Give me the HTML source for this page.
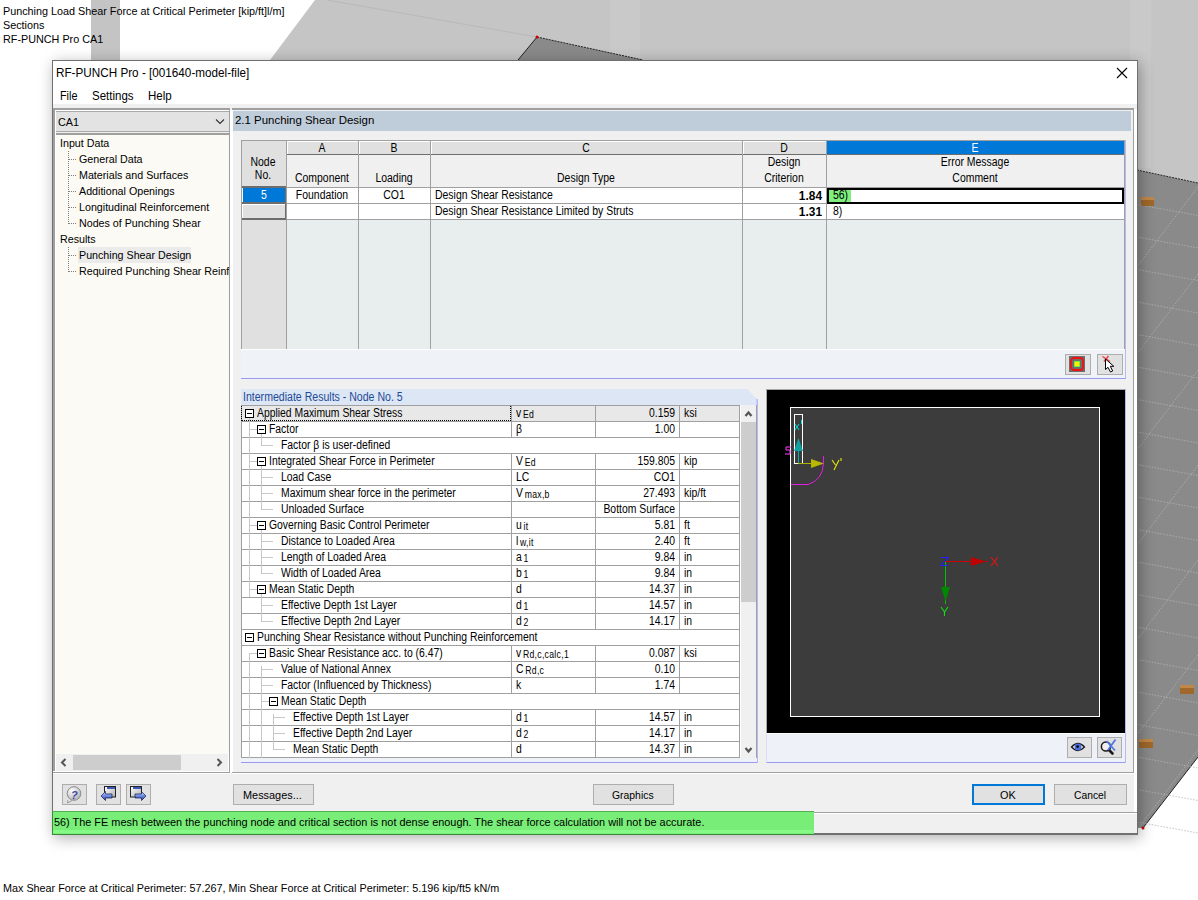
<!DOCTYPE html>
<html><head><meta charset="utf-8">
<style>
*{margin:0;padding:0;box-sizing:border-box}
html,body{width:1198px;height:900px;overflow:hidden;background:#fff}
body{position:relative;font-family:"Liberation Sans",sans-serif;font-size:12px;color:#000}
.a{position:absolute}
.t{position:absolute;white-space:nowrap}
.btn{position:absolute;background:#e1e1e1;border:1px solid #adadad}
</style></head><body>

<svg class="a" style="left:0;top:0" width="1198" height="900">
  <polygon points="315,0 1198,0 1198,60 270,60" fill="#c5c5c5"/>
  <rect x="91" y="0" width="29" height="60" fill="#c4c4c4"/>
  <polygon points="1137,60 1198,60 1198,183 1137,170" fill="#c5c5c5"/>
  <rect x="1130" y="0" width="21" height="168" fill="#c9c9c9"/>
  <rect x="610" y="0" width="30" height="60" fill="#c9c9c9"/>
  <polygon points="1137,170 1198,183 1198,757 1143,828 1137,828" fill="#8a8a8a"/>
  <path d="M1137 170L1198 183" stroke="#222" stroke-width="1" stroke-dasharray="2,1"/>
  <path d="M1143 828L1198 757" stroke="#222" stroke-width="1"/>
  <polygon points="537,37 643,60 518,60" fill="#8a8a8a"/>
  <path d="M537 37L643 60" stroke="#222" stroke-width="1" stroke-dasharray="2,1"/>
  <path d="M537 37L518 60" stroke="#222" stroke-width="1"/>
  <path d="M327 0L537 37" stroke="#b0b0b0" stroke-width="0.6"/>
  <circle cx="537" cy="37" r="1.5" fill="#c00"/>
  <circle cx="1143" cy="828" r="1.5" fill="#c00"/>
  <g stroke="#b4b4b4" stroke-width="0.8" stroke-dasharray="1.5,1.5" fill="none"><path d="M1137 204.5L1198 215.5"/><path d="M1137 237.0L1198 248.0"/><path d="M1137 269.5L1198 280.5"/><path d="M1137 302.0L1198 313.0"/><path d="M1137 334.5L1198 345.5"/><path d="M1137 367.0L1198 378.0"/><path d="M1137 399.5L1198 410.5"/><path d="M1137 432.0L1198 443.0"/><path d="M1137 464.5L1198 475.5"/><path d="M1137 497.0L1198 508.0"/><path d="M1137 529.5L1198 540.5"/><path d="M1137 562.0L1198 573.0"/><path d="M1137 594.5L1198 605.5"/><path d="M1137 627.0L1198 638.0"/><path d="M1137 659.5L1198 670.5"/><path d="M1137 692.0L1198 703.0"/><path d="M1137 724.5L1198 735.5"/><path d="M1137 757.0L1198 768.0"/><path d="M1137 789.5L1198 800.5"/><path d="M1137 822.0L1198 833.0"/><path d="M1137 267L1198 187"/><path d="M1137 354L1198 274"/><path d="M1137 450L1198 370"/><path d="M1137 545L1198 465"/><path d="M1137 640L1198 560"/><path d="M1137 735L1198 655"/><path d="M1137 830L1198 750"/></g>
  <g><rect x="1141" y="197" width="13" height="9" rx="1" fill="#a0682a"/><rect x="1141" y="197" width="13" height="3" fill="#c08848"/>
  <rect x="1180" y="685" width="14" height="9" rx="1" fill="#a0682a"/><rect x="1180" y="685" width="14" height="3" fill="#c08848"/>
  <rect x="1139" y="739" width="14" height="9" rx="1" fill="#a0682a"/><rect x="1139" y="739" width="14" height="3" fill="#c08848"/></g>
</svg>

<div class="t" style="left:3px;top:5px;font-size:10.8px;line-height:12px;">Punching Load Shear Force at Critical Perimeter [kip/ft]l/m]</div>
<div class="t" style="left:3px;top:19px;font-size:10.8px;line-height:12px;">Sections</div>
<div class="t" style="left:3px;top:33px;font-size:10.8px;line-height:12px;">RF-PUNCH Pro CA1</div>
<div class="t" style="left:3px;top:882px;font-size:10.8px;line-height:12px;">Max Shear Force at Critical Perimeter: 57.267, Min Shear Force at Critical Perimeter: 5.196 kip/ft5 kN/m</div>
<div class="a" style="left:52px;top:60px;width:1086px;height:775px;background:#f0f0f0;border:1px solid #707070;box-shadow:2px 3px 14px rgba(0,0,0,.32)"></div>
<div class="a" style="left:53px;top:61px;width:1084px;height:43px;background:#fff"></div>
<div class="t" style="left:56px;top:66px;font-size:12.6px;line-height:14px;transform:scaleX(0.93);transform-origin:0 0;">RF-PUNCH Pro - [001640-model-file]</div>
<svg class="a" style="left:1116px;top:67px" width="12" height="12"><path d="M1 1L11 11M11 1L1 11" stroke="#000" stroke-width="1.1"/></svg>
<div class="t" style="left:60px;top:89px;font-size:12px;line-height:14px;transform:scaleX(0.9);transform-origin:0 0;">File</div>
<div class="t" style="left:92px;top:89px;font-size:12px;line-height:14px;transform:scaleX(0.96);transform-origin:0 0;">Settings</div>
<div class="t" style="left:148px;top:89px;font-size:12px;line-height:14px;transform:scaleX(0.96);transform-origin:0 0;">Help</div>
<div class="a" style="left:53px;top:108px;width:177px;height:2px;background:#a0a0a0"></div>
<div class="a" style="left:53px;top:108px;width:2px;height:665px;background:#a0a0a0"></div>
<div class="a" style="left:55px;top:110px;width:174px;height:662px;background:#f0f0f0;border-left:1px solid #fff;border-top:1px solid #fff"></div>
<div class="a" style="left:229px;top:108px;width:1px;height:665px;background:#a0a0a0"></div>
<div class="a" style="left:56px;top:111px;width:173px;height:21px;background:#e3e3e3;border-top:1px solid #a9a9a9;border-bottom:1px solid #a9a9a9"></div>
<div class="t" style="left:58px;top:116px;font-size:10.8px;line-height:12px;">CA1</div>
<svg class="a" style="left:215px;top:118px" width="12" height="8"><path d="M1 1.5L5 5.5L9 1.5" stroke="#333" stroke-width="1.1" fill="none"/></svg>
<div class="a" style="left:56px;top:133px;width:173px;height:621px;background:#fbfaf4;border-top:2px solid #a0a0a0"></div>
<div class="a" style="left:78px;top:247px;width:113px;height:16px;background:#ebebeb"></div>
<div class="t" style="left:60px;top:137px;font-size:10.7px;line-height:12px;">Input Data</div>
<div class="t" style="left:79px;top:153px;font-size:10.7px;line-height:12px;">General Data</div>
<div class="t" style="left:79px;top:169px;font-size:10.7px;line-height:12px;">Materials and Surfaces</div>
<div class="t" style="left:79px;top:185px;font-size:10.7px;line-height:12px;">Additional Openings</div>
<div class="t" style="left:79px;top:201px;font-size:10.7px;line-height:12px;">Longitudinal Reinforcement</div>
<div class="t" style="left:79px;top:217px;font-size:10.7px;line-height:12px;">Nodes of Punching Shear</div>
<div class="t" style="left:60px;top:233px;font-size:10.7px;line-height:12px;">Results</div>
<div class="t" style="left:79px;top:249px;font-size:10.7px;line-height:12px;">Punching Shear Design</div>
<div class="t" style="left:79px;top:265px;font-size:10.7px;line-height:12px;">Required Punching Shear Reinf</div>
<svg class="a" style="left:56px;top:133px" width="173" height="160"><g stroke="#808080" stroke-width="1" stroke-dasharray="1,1" fill="none"><path d="M12.5 18V91"/><path d="M12.5 114V139"/><path d="M13 26.5H21"/><path d="M13 42.5H21"/><path d="M13 58.5H21"/><path d="M13 74.5H21"/><path d="M13 90.5H21"/><path d="M13 122.5H21"/><path d="M13 138.5H21"/></g></svg>
<div class="a" style="left:56px;top:754px;width:173px;height:17px;background:#f0f0f0;border-right:1px solid #fff"></div>
<div class="a" style="left:73px;top:755px;width:108px;height:15px;background:#cdcdcd"></div>
<svg class="a" style="left:58px;top:756px" width="12" height="12"><path d="M7.5 3L4 6.5L7.5 10" stroke="#555" stroke-width="2" fill="none"/></svg>
<svg class="a" style="left:213px;top:756px" width="12" height="12"><path d="M4.5 3L8 6.5L4.5 10" stroke="#555" stroke-width="2" fill="none"/></svg>
<div class="a" style="left:53px;top:771px;width:176px;height:1px;background:#fff"></div>
<div class="a" style="left:53px;top:772px;width:177px;height:1px;background:#a0a0a0"></div>
<div class="a" style="left:53px;top:773px;width:177px;height:1px;background:#fff"></div>
<div class="a" style="left:232px;top:108px;width:902px;height:2px;background:#a0a0a0"></div>
<div class="a" style="left:229px;top:108px;width:1px;height:665px;background:#a0a0a0"></div>
<div class="a" style="left:230px;top:110px;width:3px;height:663px;background:#fff"></div>
<div class="a" style="left:1133px;top:108px;width:1px;height:665px;background:#a0a0a0"></div>
<div class="a" style="left:1134px;top:109px;width:3px;height:703px;background:#fff"></div>
<div class="a" style="left:233px;top:111px;width:898px;height:20px;background:#bfcddb"></div>
<div class="t" style="left:235px;top:114px;font-size:11.45px;line-height:13px;">2.1 Punching Shear Design</div>
<div class="a" style="left:232px;top:772px;width:902px;height:1px;background:#a0a0a0"></div>
<div class="a" style="left:232px;top:773px;width:902px;height:1px;background:#fff"></div>
<div class="a" style="left:241px;top:140px;width:884px;height:209px;background:#e8eded"></div>
<div class="a" style="left:241px;top:140px;width:883px;height:47px;background:#f0f0f0"></div>
<div class="a" style="left:241px;top:140px;width:45px;height:209px;background:#e0e0e0"></div>
<div class="a" style="left:287px;top:141px;width:71px;height:13px;background:#e0e0e0;border-top:1px solid #fff;border-left:1px solid #fff"></div>
<div class="t" style="left:122px;top:141px;width:400px;text-align:center;font-size:12px;line-height:14px;transform:scaleX(0.87);transform-origin:50% 0;">A</div>
<div class="a" style="left:286px;top:154px;width:72px;height:1px;background:#6d6d6d"></div>
<div class="a" style="left:359px;top:141px;width:71px;height:13px;background:#e0e0e0;border-top:1px solid #fff;border-left:1px solid #fff"></div>
<div class="t" style="left:194px;top:141px;width:400px;text-align:center;font-size:12px;line-height:14px;transform:scaleX(0.87);transform-origin:50% 0;">B</div>
<div class="a" style="left:358px;top:154px;width:72px;height:1px;background:#6d6d6d"></div>
<div class="a" style="left:431px;top:141px;width:311px;height:13px;background:#e0e0e0;border-top:1px solid #fff;border-left:1px solid #fff"></div>
<div class="t" style="left:386px;top:141px;width:400px;text-align:center;font-size:12px;line-height:14px;transform:scaleX(0.87);transform-origin:50% 0;">C</div>
<div class="a" style="left:430px;top:154px;width:312px;height:1px;background:#6d6d6d"></div>
<div class="a" style="left:743px;top:141px;width:83px;height:13px;background:#e0e0e0;border-top:1px solid #fff;border-left:1px solid #fff"></div>
<div class="t" style="left:584px;top:141px;width:400px;text-align:center;font-size:12px;line-height:14px;transform:scaleX(0.87);transform-origin:50% 0;">D</div>
<div class="a" style="left:742px;top:154px;width:84px;height:1px;background:#6d6d6d"></div>
<div class="a" style="left:827px;top:141px;width:297px;height:13px;background:#0078d7"></div>
<div class="t" style="left:775px;top:141px;width:400px;text-align:center;font-size:12px;line-height:14px;transform:scaleX(0.87);transform-origin:50% 0;color:#fff">E</div>
<div class="a" style="left:826px;top:154px;width:298px;height:1px;background:#6d6d6d"></div>
<div class="a" style="left:286px;top:187px;width:838px;height:32px;background:#fff"></div>
<div class="a" style="left:242px;top:187px;width:43px;height:16px;background:#fff"></div>
<div class="a" style="left:243px;top:188px;width:42px;height:14px;background:#0078d7"></div>
<div class="a" style="left:242px;top:204px;width:43px;height:14px;background:#e0e0e0;border-top:1px solid #fff;border-left:1px solid #fff"></div>
<div class="a" style="left:241px;top:218px;width:45px;height:2px;background:#6d6d6d"></div>
<div class="a" style="left:241px;top:202px;width:45px;height:2px;background:#6d6d6d"></div>
<div class="a" style="left:241px;top:186px;width:45px;height:2px;background:#6d6d6d"></div>
<div class="a" style="left:285px;top:187px;width:1px;height:33px;background:#6d6d6d"></div>
<div class="a" style="left:241px;top:140px;width:1px;height:209px;background:#a0a0a0"></div>
<div class="a" style="left:286px;top:140px;width:1px;height:209px;background:#a0a0a0"></div>
<div class="a" style="left:358px;top:140px;width:1px;height:209px;background:#a0a0a0"></div>
<div class="a" style="left:430px;top:140px;width:1px;height:209px;background:#a0a0a0"></div>
<div class="a" style="left:742px;top:140px;width:1px;height:209px;background:#a0a0a0"></div>
<div class="a" style="left:826px;top:140px;width:1px;height:209px;background:#a0a0a0"></div>
<div class="a" style="left:1124px;top:140px;width:1px;height:209px;background:#a0a0a0"></div>
<div class="a" style="left:241px;top:140px;width:883px;height:1px;background:#a0a0a0"></div>
<div class="a" style="left:286px;top:187px;width:838px;height:1px;background:#a0a0a0"></div>
<div class="a" style="left:286px;top:203px;width:838px;height:1px;background:#a0a0a0"></div>
<div class="a" style="left:286px;top:219px;width:838px;height:1px;background:#a0a0a0"></div>
<div class="t" style="left:63px;top:155px;width:400px;text-align:center;font-size:12px;line-height:14px;transform:scaleX(0.87);transform-origin:50% 0;">Node</div>
<div class="t" style="left:63px;top:168px;width:400px;text-align:center;font-size:12px;line-height:14px;transform:scaleX(0.87);transform-origin:50% 0;">No.</div>
<div class="t" style="left:122px;top:171px;width:400px;text-align:center;font-size:12px;line-height:14px;transform:scaleX(0.87);transform-origin:50% 0;">Component</div>
<div class="t" style="left:194px;top:171px;width:400px;text-align:center;font-size:12px;line-height:14px;transform:scaleX(0.87);transform-origin:50% 0;">Loading</div>
<div class="t" style="left:386px;top:171px;width:400px;text-align:center;font-size:12px;line-height:14px;transform:scaleX(0.87);transform-origin:50% 0;">Design Type</div>
<div class="t" style="left:584px;top:155px;width:400px;text-align:center;font-size:12px;line-height:14px;transform:scaleX(0.87);transform-origin:50% 0;">Design</div>
<div class="t" style="left:584px;top:171px;width:400px;text-align:center;font-size:12px;line-height:14px;transform:scaleX(0.87);transform-origin:50% 0;">Criterion</div>
<div class="t" style="left:775px;top:155px;width:400px;text-align:center;font-size:12px;line-height:14px;transform:scaleX(0.87);transform-origin:50% 0;">Error Message</div>
<div class="t" style="left:775px;top:171px;width:400px;text-align:center;font-size:12px;line-height:14px;transform:scaleX(0.87);transform-origin:50% 0;">Comment</div>
<div class="t" style="left:64px;top:188px;width:400px;text-align:center;font-size:12px;line-height:14px;transform:scaleX(0.87);transform-origin:50% 0;color:#fff">5</div>
<div class="t" style="left:122px;top:188px;width:400px;text-align:center;font-size:12px;line-height:14px;transform:scaleX(0.87);transform-origin:50% 0;">Foundation</div>
<div class="t" style="left:194px;top:188px;width:400px;text-align:center;font-size:12px;line-height:14px;transform:scaleX(0.87);transform-origin:50% 0;">CO1</div>
<div class="t" style="left:435px;top:188px;font-size:12px;line-height:14px;transform:scaleX(0.87);transform-origin:0 0;">Design Shear Resistance</div>
<div class="t" style="left:422px;top:189px;width:400px;text-align:right;font-size:12.5px;line-height:14px;transform:scaleX(0.95);transform-origin:100% 0;font-weight:bold">1.84</div>
<div class="a" style="left:827px;top:188px;width:297px;height:16px;border:2px solid #000;background:#fff"></div>
<div class="a" style="left:829px;top:190px;width:22px;height:12px;background:#7df07d"></div>
<div class="t" style="left:833px;top:188px;font-size:12px;line-height:14px;transform:scaleX(0.87);transform-origin:0 0;">56)</div>
<div class="t" style="left:435px;top:204px;font-size:12px;line-height:14px;transform:scaleX(0.87);transform-origin:0 0;">Design Shear Resistance Limited by Struts</div>
<div class="t" style="left:422px;top:205px;width:400px;text-align:right;font-size:12.5px;line-height:14px;transform:scaleX(0.95);transform-origin:100% 0;font-weight:bold">1.31</div>
<div class="t" style="left:833px;top:204px;font-size:12px;line-height:14px;transform:scaleX(0.87);transform-origin:0 0;">8)</div>
<div class="a" style="left:241px;top:349px;width:885px;height:30px;background:#eff3f8;border-bottom:1px solid #9a9af0;border-right:1px solid #b8b8f8"></div>
<div class="a" style="left:1125px;top:140px;width:1px;height:209px;background:#b8b8f8"></div>
<div class="a" style="left:241px;top:349px;width:884px;height:1px;background:#fff"></div>
<div class="a" style="left:1065px;top:354px;width:26px;height:21px;background:#e1e1e1;border:1px solid #adadad"></div>
<div class="a" style="left:1097px;top:354px;width:26px;height:21px;background:#e1e1e1;border:1px solid #adadad"></div>
<svg class="a" style="left:1069px;top:356px" width="17" height="17"><rect x="0" y="0" width="16" height="16" fill="#6d6d6d"/><rect x="2" y="2" width="12" height="12" rx="3" fill="none" stroke="#ee1111" stroke-width="1.8"/><rect x="5" y="5" width="6" height="6" fill="#44ee44"/><rect x="5.7" y="5.7" width="4.6" height="4.6" fill="#ffee00"/></svg>
<svg class="a" style="left:1099px;top:355px" width="20" height="20"><path d="M3.5 1.5L11 6.5M9.5 1L5 6.5" stroke="#ee4444" stroke-width="1.5"/><path d="M6.5 4L6.5 14.5L9 12.3L11.5 17L13.7 16L11.3 11.3L14.8 11.3Z" fill="#fff" stroke="#000" stroke-width="1"/></svg>
<style>.sb{font-size:10px;margin-left:2px;letter-spacing:.35px;position:relative;top:1px}</style><svg class="a" style="left:241px;top:389px" width="517" height="17"><path d="M0 0H506L516 10V16H0Z" fill="#dce6f4"/><path d="M516 10V17" stroke="#b8b8f8"/></svg>
<div class="t" style="left:243px;top:390px;font-size:12px;line-height:14px;transform:scaleX(0.88);transform-origin:0 0;color:#1e4a96">Intermediate Results - Node No. 5</div>
<div class="a" style="left:241px;top:405px;width:499px;height:353px;background:#fff"></div>
<div class="a" style="left:241px;top:406px;width:499px;height:15px;background:#e8e8e8"></div>
<div class="t" style="left:257px;top:406px;font-size:12px;line-height:14px;transform:scaleX(0.865);transform-origin:0 0;">Applied Maximum Shear Stress</div>
<div class="a" style="left:511px;top:405px;width:1px;height:16px;background:#a0a0a0"></div>
<div class="a" style="left:595px;top:405px;width:1px;height:16px;background:#a0a0a0"></div>
<div class="a" style="left:679px;top:405px;width:1px;height:16px;background:#a0a0a0"></div>
<div class="t" style="left:516px;top:406px;font-size:12px;line-height:14px;transform:scaleX(0.865);transform-origin:0 0;">v<span class=sb>Ed</span></div>
<div class="t" style="left:275px;top:406px;width:400px;text-align:right;font-size:12px;line-height:14px;transform:scaleX(0.865);transform-origin:100% 0;">0.159</div>
<div class="t" style="left:684px;top:406px;font-size:12px;line-height:14px;transform:scaleX(0.865);transform-origin:0 0;">ksi</div>
<div class="a" style="left:241px;top:421px;width:499px;height:1px;background:#a0a0a0"></div>
<div class="t" style="left:269px;top:422px;font-size:12px;line-height:14px;transform:scaleX(0.865);transform-origin:0 0;">Factor</div>
<div class="a" style="left:511px;top:421px;width:1px;height:16px;background:#a0a0a0"></div>
<div class="a" style="left:595px;top:421px;width:1px;height:16px;background:#a0a0a0"></div>
<div class="a" style="left:679px;top:421px;width:1px;height:16px;background:#a0a0a0"></div>
<div class="t" style="left:516px;top:422px;font-size:12px;line-height:14px;transform:scaleX(0.865);transform-origin:0 0;">β</div>
<div class="t" style="left:275px;top:422px;width:400px;text-align:right;font-size:12px;line-height:14px;transform:scaleX(0.865);transform-origin:100% 0;">1.00</div>
<div class="t" style="left:684px;top:422px;font-size:12px;line-height:14px;transform:scaleX(0.865);transform-origin:0 0;"></div>
<div class="a" style="left:241px;top:437px;width:499px;height:1px;background:#a0a0a0"></div>
<div class="t" style="left:281px;top:438px;font-size:12px;line-height:14px;transform:scaleX(0.865);transform-origin:0 0;">Factor β is user-defined</div>
<div class="a" style="left:241px;top:453px;width:499px;height:1px;background:#a0a0a0"></div>
<div class="t" style="left:269px;top:454px;font-size:12px;line-height:14px;transform:scaleX(0.865);transform-origin:0 0;">Integrated Shear Force in Perimeter</div>
<div class="a" style="left:511px;top:453px;width:1px;height:16px;background:#a0a0a0"></div>
<div class="a" style="left:595px;top:453px;width:1px;height:16px;background:#a0a0a0"></div>
<div class="a" style="left:679px;top:453px;width:1px;height:16px;background:#a0a0a0"></div>
<div class="t" style="left:516px;top:454px;font-size:12px;line-height:14px;transform:scaleX(0.865);transform-origin:0 0;">V<span class=sb>Ed</span></div>
<div class="t" style="left:275px;top:454px;width:400px;text-align:right;font-size:12px;line-height:14px;transform:scaleX(0.865);transform-origin:100% 0;">159.805</div>
<div class="t" style="left:684px;top:454px;font-size:12px;line-height:14px;transform:scaleX(0.865);transform-origin:0 0;">kip</div>
<div class="a" style="left:241px;top:469px;width:499px;height:1px;background:#a0a0a0"></div>
<div class="t" style="left:281px;top:470px;font-size:12px;line-height:14px;transform:scaleX(0.865);transform-origin:0 0;">Load Case</div>
<div class="a" style="left:511px;top:469px;width:1px;height:16px;background:#a0a0a0"></div>
<div class="a" style="left:595px;top:469px;width:1px;height:16px;background:#a0a0a0"></div>
<div class="a" style="left:679px;top:469px;width:1px;height:16px;background:#a0a0a0"></div>
<div class="t" style="left:516px;top:470px;font-size:12px;line-height:14px;transform:scaleX(0.865);transform-origin:0 0;">LC</div>
<div class="t" style="left:275px;top:470px;width:400px;text-align:right;font-size:12px;line-height:14px;transform:scaleX(0.865);transform-origin:100% 0;">CO1</div>
<div class="t" style="left:684px;top:470px;font-size:12px;line-height:14px;transform:scaleX(0.865);transform-origin:0 0;"></div>
<div class="a" style="left:241px;top:485px;width:499px;height:1px;background:#a0a0a0"></div>
<div class="t" style="left:281px;top:486px;font-size:12px;line-height:14px;transform:scaleX(0.865);transform-origin:0 0;">Maximum shear force in the perimeter</div>
<div class="a" style="left:511px;top:485px;width:1px;height:16px;background:#a0a0a0"></div>
<div class="a" style="left:595px;top:485px;width:1px;height:16px;background:#a0a0a0"></div>
<div class="a" style="left:679px;top:485px;width:1px;height:16px;background:#a0a0a0"></div>
<div class="t" style="left:516px;top:486px;font-size:12px;line-height:14px;transform:scaleX(0.865);transform-origin:0 0;">V<span class=sb>max,b</span></div>
<div class="t" style="left:275px;top:486px;width:400px;text-align:right;font-size:12px;line-height:14px;transform:scaleX(0.865);transform-origin:100% 0;">27.493</div>
<div class="t" style="left:684px;top:486px;font-size:12px;line-height:14px;transform:scaleX(0.865);transform-origin:0 0;">kip/ft</div>
<div class="a" style="left:241px;top:501px;width:499px;height:1px;background:#a0a0a0"></div>
<div class="t" style="left:281px;top:502px;font-size:12px;line-height:14px;transform:scaleX(0.865);transform-origin:0 0;">Unloaded Surface</div>
<div class="a" style="left:511px;top:501px;width:1px;height:16px;background:#a0a0a0"></div>
<div class="a" style="left:595px;top:501px;width:1px;height:16px;background:#a0a0a0"></div>
<div class="a" style="left:679px;top:501px;width:1px;height:16px;background:#a0a0a0"></div>
<div class="t" style="left:516px;top:502px;font-size:12px;line-height:14px;transform:scaleX(0.865);transform-origin:0 0;"></div>
<div class="t" style="left:275px;top:502px;width:400px;text-align:right;font-size:12px;line-height:14px;transform:scaleX(0.865);transform-origin:100% 0;">Bottom Surface</div>
<div class="t" style="left:684px;top:502px;font-size:12px;line-height:14px;transform:scaleX(0.865);transform-origin:0 0;"></div>
<div class="a" style="left:241px;top:517px;width:499px;height:1px;background:#a0a0a0"></div>
<div class="t" style="left:269px;top:518px;font-size:12px;line-height:14px;transform:scaleX(0.865);transform-origin:0 0;">Governing Basic Control Perimeter</div>
<div class="a" style="left:511px;top:517px;width:1px;height:16px;background:#a0a0a0"></div>
<div class="a" style="left:595px;top:517px;width:1px;height:16px;background:#a0a0a0"></div>
<div class="a" style="left:679px;top:517px;width:1px;height:16px;background:#a0a0a0"></div>
<div class="t" style="left:516px;top:518px;font-size:12px;line-height:14px;transform:scaleX(0.865);transform-origin:0 0;">u<span class=sb>it</span></div>
<div class="t" style="left:275px;top:518px;width:400px;text-align:right;font-size:12px;line-height:14px;transform:scaleX(0.865);transform-origin:100% 0;">5.81</div>
<div class="t" style="left:684px;top:518px;font-size:12px;line-height:14px;transform:scaleX(0.865);transform-origin:0 0;">ft</div>
<div class="a" style="left:241px;top:533px;width:499px;height:1px;background:#a0a0a0"></div>
<div class="t" style="left:281px;top:534px;font-size:12px;line-height:14px;transform:scaleX(0.865);transform-origin:0 0;">Distance to Loaded Area</div>
<div class="a" style="left:511px;top:533px;width:1px;height:16px;background:#a0a0a0"></div>
<div class="a" style="left:595px;top:533px;width:1px;height:16px;background:#a0a0a0"></div>
<div class="a" style="left:679px;top:533px;width:1px;height:16px;background:#a0a0a0"></div>
<div class="t" style="left:516px;top:534px;font-size:12px;line-height:14px;transform:scaleX(0.865);transform-origin:0 0;">l<span class=sb>w,it</span></div>
<div class="t" style="left:275px;top:534px;width:400px;text-align:right;font-size:12px;line-height:14px;transform:scaleX(0.865);transform-origin:100% 0;">2.40</div>
<div class="t" style="left:684px;top:534px;font-size:12px;line-height:14px;transform:scaleX(0.865);transform-origin:0 0;">ft</div>
<div class="a" style="left:241px;top:549px;width:499px;height:1px;background:#a0a0a0"></div>
<div class="t" style="left:281px;top:550px;font-size:12px;line-height:14px;transform:scaleX(0.865);transform-origin:0 0;">Length of Loaded Area</div>
<div class="a" style="left:511px;top:549px;width:1px;height:16px;background:#a0a0a0"></div>
<div class="a" style="left:595px;top:549px;width:1px;height:16px;background:#a0a0a0"></div>
<div class="a" style="left:679px;top:549px;width:1px;height:16px;background:#a0a0a0"></div>
<div class="t" style="left:516px;top:550px;font-size:12px;line-height:14px;transform:scaleX(0.865);transform-origin:0 0;">a<span class=sb>1</span></div>
<div class="t" style="left:275px;top:550px;width:400px;text-align:right;font-size:12px;line-height:14px;transform:scaleX(0.865);transform-origin:100% 0;">9.84</div>
<div class="t" style="left:684px;top:550px;font-size:12px;line-height:14px;transform:scaleX(0.865);transform-origin:0 0;">in</div>
<div class="a" style="left:241px;top:565px;width:499px;height:1px;background:#a0a0a0"></div>
<div class="t" style="left:281px;top:566px;font-size:12px;line-height:14px;transform:scaleX(0.865);transform-origin:0 0;">Width of Loaded Area</div>
<div class="a" style="left:511px;top:565px;width:1px;height:16px;background:#a0a0a0"></div>
<div class="a" style="left:595px;top:565px;width:1px;height:16px;background:#a0a0a0"></div>
<div class="a" style="left:679px;top:565px;width:1px;height:16px;background:#a0a0a0"></div>
<div class="t" style="left:516px;top:566px;font-size:12px;line-height:14px;transform:scaleX(0.865);transform-origin:0 0;">b<span class=sb>1</span></div>
<div class="t" style="left:275px;top:566px;width:400px;text-align:right;font-size:12px;line-height:14px;transform:scaleX(0.865);transform-origin:100% 0;">9.84</div>
<div class="t" style="left:684px;top:566px;font-size:12px;line-height:14px;transform:scaleX(0.865);transform-origin:0 0;">in</div>
<div class="a" style="left:241px;top:581px;width:499px;height:1px;background:#a0a0a0"></div>
<div class="t" style="left:269px;top:582px;font-size:12px;line-height:14px;transform:scaleX(0.865);transform-origin:0 0;">Mean Static Depth</div>
<div class="a" style="left:511px;top:581px;width:1px;height:16px;background:#a0a0a0"></div>
<div class="a" style="left:595px;top:581px;width:1px;height:16px;background:#a0a0a0"></div>
<div class="a" style="left:679px;top:581px;width:1px;height:16px;background:#a0a0a0"></div>
<div class="t" style="left:516px;top:582px;font-size:12px;line-height:14px;transform:scaleX(0.865);transform-origin:0 0;">d</div>
<div class="t" style="left:275px;top:582px;width:400px;text-align:right;font-size:12px;line-height:14px;transform:scaleX(0.865);transform-origin:100% 0;">14.37</div>
<div class="t" style="left:684px;top:582px;font-size:12px;line-height:14px;transform:scaleX(0.865);transform-origin:0 0;">in</div>
<div class="a" style="left:241px;top:597px;width:499px;height:1px;background:#a0a0a0"></div>
<div class="t" style="left:281px;top:598px;font-size:12px;line-height:14px;transform:scaleX(0.865);transform-origin:0 0;">Effective Depth 1st Layer</div>
<div class="a" style="left:511px;top:597px;width:1px;height:16px;background:#a0a0a0"></div>
<div class="a" style="left:595px;top:597px;width:1px;height:16px;background:#a0a0a0"></div>
<div class="a" style="left:679px;top:597px;width:1px;height:16px;background:#a0a0a0"></div>
<div class="t" style="left:516px;top:598px;font-size:12px;line-height:14px;transform:scaleX(0.865);transform-origin:0 0;">d<span class=sb>1</span></div>
<div class="t" style="left:275px;top:598px;width:400px;text-align:right;font-size:12px;line-height:14px;transform:scaleX(0.865);transform-origin:100% 0;">14.57</div>
<div class="t" style="left:684px;top:598px;font-size:12px;line-height:14px;transform:scaleX(0.865);transform-origin:0 0;">in</div>
<div class="a" style="left:241px;top:613px;width:499px;height:1px;background:#a0a0a0"></div>
<div class="t" style="left:281px;top:614px;font-size:12px;line-height:14px;transform:scaleX(0.865);transform-origin:0 0;">Effective Depth 2nd Layer</div>
<div class="a" style="left:511px;top:613px;width:1px;height:16px;background:#a0a0a0"></div>
<div class="a" style="left:595px;top:613px;width:1px;height:16px;background:#a0a0a0"></div>
<div class="a" style="left:679px;top:613px;width:1px;height:16px;background:#a0a0a0"></div>
<div class="t" style="left:516px;top:614px;font-size:12px;line-height:14px;transform:scaleX(0.865);transform-origin:0 0;">d<span class=sb>2</span></div>
<div class="t" style="left:275px;top:614px;width:400px;text-align:right;font-size:12px;line-height:14px;transform:scaleX(0.865);transform-origin:100% 0;">14.17</div>
<div class="t" style="left:684px;top:614px;font-size:12px;line-height:14px;transform:scaleX(0.865);transform-origin:0 0;">in</div>
<div class="a" style="left:241px;top:629px;width:499px;height:1px;background:#a0a0a0"></div>
<div class="t" style="left:257px;top:630px;font-size:12px;line-height:14px;transform:scaleX(0.865);transform-origin:0 0;">Punching Shear Resistance without Punching Reinforcement</div>
<div class="a" style="left:241px;top:645px;width:499px;height:1px;background:#a0a0a0"></div>
<div class="t" style="left:269px;top:646px;font-size:12px;line-height:14px;transform:scaleX(0.865);transform-origin:0 0;">Basic Shear Resistance acc. to (6.47)</div>
<div class="a" style="left:511px;top:645px;width:1px;height:16px;background:#a0a0a0"></div>
<div class="a" style="left:595px;top:645px;width:1px;height:16px;background:#a0a0a0"></div>
<div class="a" style="left:679px;top:645px;width:1px;height:16px;background:#a0a0a0"></div>
<div class="t" style="left:516px;top:646px;font-size:12px;line-height:14px;transform:scaleX(0.865);transform-origin:0 0;">v<span class=sb>Rd,c,calc,1</span></div>
<div class="t" style="left:275px;top:646px;width:400px;text-align:right;font-size:12px;line-height:14px;transform:scaleX(0.865);transform-origin:100% 0;">0.087</div>
<div class="t" style="left:684px;top:646px;font-size:12px;line-height:14px;transform:scaleX(0.865);transform-origin:0 0;">ksi</div>
<div class="a" style="left:241px;top:661px;width:499px;height:1px;background:#a0a0a0"></div>
<div class="t" style="left:281px;top:662px;font-size:12px;line-height:14px;transform:scaleX(0.865);transform-origin:0 0;">Value of National Annex</div>
<div class="a" style="left:511px;top:661px;width:1px;height:16px;background:#a0a0a0"></div>
<div class="a" style="left:595px;top:661px;width:1px;height:16px;background:#a0a0a0"></div>
<div class="a" style="left:679px;top:661px;width:1px;height:16px;background:#a0a0a0"></div>
<div class="t" style="left:516px;top:662px;font-size:12px;line-height:14px;transform:scaleX(0.865);transform-origin:0 0;">C<span class=sb>Rd,c</span></div>
<div class="t" style="left:275px;top:662px;width:400px;text-align:right;font-size:12px;line-height:14px;transform:scaleX(0.865);transform-origin:100% 0;">0.10</div>
<div class="t" style="left:684px;top:662px;font-size:12px;line-height:14px;transform:scaleX(0.865);transform-origin:0 0;"></div>
<div class="a" style="left:241px;top:677px;width:499px;height:1px;background:#a0a0a0"></div>
<div class="t" style="left:281px;top:678px;font-size:12px;line-height:14px;transform:scaleX(0.865);transform-origin:0 0;">Factor (Influenced by Thickness)</div>
<div class="a" style="left:511px;top:677px;width:1px;height:16px;background:#a0a0a0"></div>
<div class="a" style="left:595px;top:677px;width:1px;height:16px;background:#a0a0a0"></div>
<div class="a" style="left:679px;top:677px;width:1px;height:16px;background:#a0a0a0"></div>
<div class="t" style="left:516px;top:678px;font-size:12px;line-height:14px;transform:scaleX(0.865);transform-origin:0 0;">k</div>
<div class="t" style="left:275px;top:678px;width:400px;text-align:right;font-size:12px;line-height:14px;transform:scaleX(0.865);transform-origin:100% 0;">1.74</div>
<div class="t" style="left:684px;top:678px;font-size:12px;line-height:14px;transform:scaleX(0.865);transform-origin:0 0;"></div>
<div class="a" style="left:241px;top:693px;width:499px;height:1px;background:#a0a0a0"></div>
<div class="t" style="left:281px;top:694px;font-size:12px;line-height:14px;transform:scaleX(0.865);transform-origin:0 0;">Mean Static Depth</div>
<div class="a" style="left:241px;top:709px;width:499px;height:1px;background:#a0a0a0"></div>
<div class="t" style="left:293px;top:710px;font-size:12px;line-height:14px;transform:scaleX(0.865);transform-origin:0 0;">Effective Depth 1st Layer</div>
<div class="a" style="left:511px;top:709px;width:1px;height:16px;background:#a0a0a0"></div>
<div class="a" style="left:595px;top:709px;width:1px;height:16px;background:#a0a0a0"></div>
<div class="a" style="left:679px;top:709px;width:1px;height:16px;background:#a0a0a0"></div>
<div class="t" style="left:516px;top:710px;font-size:12px;line-height:14px;transform:scaleX(0.865);transform-origin:0 0;">d<span class=sb>1</span></div>
<div class="t" style="left:275px;top:710px;width:400px;text-align:right;font-size:12px;line-height:14px;transform:scaleX(0.865);transform-origin:100% 0;">14.57</div>
<div class="t" style="left:684px;top:710px;font-size:12px;line-height:14px;transform:scaleX(0.865);transform-origin:0 0;">in</div>
<div class="a" style="left:241px;top:725px;width:499px;height:1px;background:#a0a0a0"></div>
<div class="t" style="left:293px;top:726px;font-size:12px;line-height:14px;transform:scaleX(0.865);transform-origin:0 0;">Effective Depth 2nd Layer</div>
<div class="a" style="left:511px;top:725px;width:1px;height:16px;background:#a0a0a0"></div>
<div class="a" style="left:595px;top:725px;width:1px;height:16px;background:#a0a0a0"></div>
<div class="a" style="left:679px;top:725px;width:1px;height:16px;background:#a0a0a0"></div>
<div class="t" style="left:516px;top:726px;font-size:12px;line-height:14px;transform:scaleX(0.865);transform-origin:0 0;">d<span class=sb>2</span></div>
<div class="t" style="left:275px;top:726px;width:400px;text-align:right;font-size:12px;line-height:14px;transform:scaleX(0.865);transform-origin:100% 0;">14.17</div>
<div class="t" style="left:684px;top:726px;font-size:12px;line-height:14px;transform:scaleX(0.865);transform-origin:0 0;">in</div>
<div class="a" style="left:241px;top:741px;width:499px;height:1px;background:#a0a0a0"></div>
<div class="t" style="left:293px;top:742px;font-size:12px;line-height:14px;transform:scaleX(0.865);transform-origin:0 0;">Mean Static Depth</div>
<div class="a" style="left:511px;top:741px;width:1px;height:16px;background:#a0a0a0"></div>
<div class="a" style="left:595px;top:741px;width:1px;height:16px;background:#a0a0a0"></div>
<div class="a" style="left:679px;top:741px;width:1px;height:16px;background:#a0a0a0"></div>
<div class="t" style="left:516px;top:742px;font-size:12px;line-height:14px;transform:scaleX(0.865);transform-origin:0 0;">d</div>
<div class="t" style="left:275px;top:742px;width:400px;text-align:right;font-size:12px;line-height:14px;transform:scaleX(0.865);transform-origin:100% 0;">14.37</div>
<div class="t" style="left:684px;top:742px;font-size:12px;line-height:14px;transform:scaleX(0.865);transform-origin:0 0;">in</div>
<div class="a" style="left:241px;top:757px;width:499px;height:1px;background:#a0a0a0"></div>
<div class="a" style="left:241px;top:405px;width:1px;height:353px;background:#a0a0a0"></div>
<div class="a" style="left:739px;top:405px;width:1px;height:353px;background:#a0a0a0"></div>
<svg class="a" style="left:0;top:0" width="800" height="800"><g stroke="#c8c8c8" stroke-width="1" fill="none"><path d="M249.5 418V597"/><path d="M249 429.5H257"/><path d="M249 461.5H257"/><path d="M249 525.5H257"/><path d="M249 589.5H257"/><path d="M261.5 434V445"/><path d="M261 445.5H273"/><path d="M261.5 466V509"/><path d="M261 477.5H273"/><path d="M261 493.5H273"/><path d="M261 509.5H273"/><path d="M261.5 530V573"/><path d="M261 541.5H273"/><path d="M261 557.5H273"/><path d="M261 573.5H273"/><path d="M261.5 594V621"/><path d="M261 605.5H273"/><path d="M261 621.5H273"/><path d="M249.5 654V758"/><path d="M249 653.5H257"/><path d="M261.5 666V758"/><path d="M261 669.5H273"/><path d="M261 685.5H273"/><path d="M261 701.5H269"/><path d="M273.5 714V749"/><path d="M273 717.5H285"/><path d="M273 733.5H285"/><path d="M273 749.5H285"/></g></svg>
<svg class="a" style="left:0;top:0" width="800" height="800"><rect x="245.5" y="409.5" width="8" height="8" fill="#fff" stroke="#000"/><path d="M247 413.5H252" stroke="#000"/><rect x="257.5" y="425.5" width="8" height="8" fill="#fff" stroke="#000"/><path d="M259 429.5H264" stroke="#000"/><rect x="257.5" y="457.5" width="8" height="8" fill="#fff" stroke="#000"/><path d="M259 461.5H264" stroke="#000"/><rect x="257.5" y="521.5" width="8" height="8" fill="#fff" stroke="#000"/><path d="M259 525.5H264" stroke="#000"/><rect x="257.5" y="585.5" width="8" height="8" fill="#fff" stroke="#000"/><path d="M259 589.5H264" stroke="#000"/><rect x="245.5" y="633.5" width="8" height="8" fill="#fff" stroke="#000"/><path d="M247 637.5H252" stroke="#000"/><rect x="257.5" y="649.5" width="8" height="8" fill="#fff" stroke="#000"/><path d="M259 653.5H264" stroke="#000"/><rect x="269.5" y="697.5" width="8" height="8" fill="#fff" stroke="#000"/><path d="M271 701.5H276" stroke="#000"/></svg>
<div class="a" style="left:241px;top:405px;width:270px;height:16px;border:1px dotted #000"></div>
<div class="a" style="left:740px;top:405px;width:17px;height:353px;background:#f0f0f0;border-left:1px solid #fff"></div>
<div class="a" style="left:741px;top:422px;width:16px;height:180px;background:#cdcdcd"></div>
<svg class="a" style="left:743px;top:408px" width="12" height="10"><path d="M2.5 8L5.5 4.5L8.5 8" stroke="#555" stroke-width="2.2" fill="none"/></svg>
<div class="a" style="left:241px;top:405px;width:499px;height:1px;background:#a0a0a0"></div>
<div class="a" style="left:756px;top:405px;width:1px;height:353px;background:#a0a0a0"></div>
<svg class="a" style="left:743px;top:745px" width="12" height="10"><path d="M2.5 3L5.5 6.5L8.5 3" stroke="#555" stroke-width="2.2" fill="none"/></svg>
<div class="a" style="left:241px;top:758px;width:517px;height:5px;background:#eef2f8;border-bottom:1px solid #9a9af0"></div>
<div class="a" style="left:757px;top:399px;width:1px;height:364px;background:#b8b8f8"></div>
<div class="a" style="left:766px;top:389px;width:359px;height:344px;background:#000;border-top:1px solid #a8a8a8;border-left:1px solid #a8a8a8"></div>
<div class="a" style="left:790px;top:407px;width:310px;height:310px;background:#3c3c3c;border:1px solid #fff"></div>
<div class="a" style="left:766px;top:733px;width:360px;height:30px;background:#eef2f8;border-bottom:1px solid #9a9af0;border-left:1px solid #d8e0f8;border-top:1px solid #fff"></div>
<div class="a" style="left:1125px;top:389px;width:1px;height:374px;background:#b8b8f8"></div>
<svg class="a" style="left:767px;top:390px" width="357" height="343">
<g transform="translate(-767,-390)" font-family="Liberation Sans">
<rect x="794.5" y="414.5" width="8" height="49" fill="none" stroke="#fff" stroke-width="1"/>
<path d="M798.5 463V450" stroke="#00b0b0" stroke-width="1"/>
<path d="M794 451L798.5 438L803 451Z" fill="#10a0a0"/>
<path d="M795 424L799 430M799 424L795 430M801.5 420V424" stroke="#00e0e0" stroke-width="1"/>
<path d="M798 463.5H812" stroke="#b0b000" stroke-width="1"/>
<path d="M811 459L824 463.5L811 468Z" fill="#b8b800"/>
<path d="M832 460L835.5 465M839 460L834 470M841 458V461" stroke="#e8e800" stroke-width="1.1"/>
<path d="M791 484.5H808Q823 480 823.5 463V456" stroke="#e020e0" stroke-width="1" fill="none"/>
<path d="M791 447H786V450H790V454H785" stroke="#ff40ff" stroke-width="1" fill="none"/>
<path d="M945 561.5H988" stroke="#d00000" stroke-width="1"/>
<path d="M971 557L986 561.5L971 566Z" fill="#c00000"/>
<path d="M991 557L998 566M998 557L991 566" stroke="#f01010" stroke-width="1.1"/>
<path d="M945.5 562V604" stroke="#00c000" stroke-width="1"/>
<path d="M941 587L945.5 601L950 587Z" fill="#008800"/>
<path d="M941 607L944.5 612M948 607L944.5 612V616" stroke="#10e010" stroke-width="1.1" fill="none"/>
<path d="M941 557.5H948L941 565.5H948" stroke="#2020ff" stroke-width="1.1" fill="none"/>
</g></svg>
<div class="a" style="left:1067px;top:737px;width:25px;height:21px;background:#e1e1e1;border:1px solid #adadad"></div>
<div class="a" style="left:1097px;top:737px;width:25px;height:21px;background:#e1e1e1;border:1px solid #adadad"></div>
<svg class="a" style="left:1070px;top:740px" width="16" height="14"><path d="M1.5 7Q8 0 14.5 7Q8 14 1.5 7Z" fill="#eaeaea" stroke="#1a1a1a" stroke-width="1.3"/><circle cx="8" cy="7" r="3.4" fill="#4a6ee0"/><circle cx="7.6" cy="6.6" r="1.3" fill="#000"/></svg>
<svg class="a" style="left:1099px;top:738px" width="22" height="19"><circle cx="7" cy="8.5" r="4.6" fill="#f0f0f0" stroke="#1a1a1a" stroke-width="1.5"/><path d="M10 12L13.5 15.5" stroke="#1a1a1a" stroke-width="2.6" stroke-linecap="round"/><path d="M7.5 3L16 12.5M16.5 1.5L9 12" stroke="#5078e0" stroke-width="1.8"/></svg>
<div class="a" style="left:62px;top:784px;width:25px;height:21px;background:#e1e1e1;border:1px solid #adadad"></div>
<div class="a" style="left:96px;top:784px;width:25px;height:21px;background:#e1e1e1;border:1px solid #adadad"></div>
<div class="a" style="left:126px;top:784px;width:25px;height:21px;background:#e1e1e1;border:1px solid #adadad"></div>
<svg class="a" style="left:64px;top:785px" width="20" height="19"><defs><radialGradient id="hg" cx="35%" cy="30%" r="70%"><stop offset="0" stop-color="#fff"/><stop offset="1" stop-color="#b8b8b8"/></radialGradient><linearGradient id="ag" x1="0" y1="0" x2="0" y2="1"><stop offset="0" stop-color="#d8e4ff"/><stop offset=".5" stop-color="#6a8ae0"/><stop offset="1" stop-color="#2a3a90"/></linearGradient><linearGradient id="wg" x1="0" y1="0" x2="1" y2="1"><stop offset="0" stop-color="#fff"/><stop offset="1" stop-color="#b0b0b0"/></linearGradient></defs><path d="M4 15L3.5 18L8 15.5" fill="#e8e8e8" stroke="#888" stroke-width=".8"/><circle cx="10" cy="8.5" r="6.8" fill="url(#hg)" stroke="#8a8a8a" stroke-width="1"/><text x="7" y="13.5" font-size="11" font-weight="bold" font-style="italic" fill="#3a48a8" font-family="Liberation Sans">?</text></svg>
<svg class="a" style="left:99px;top:785px" width="20" height="18"><rect x="5.5" y="1.5" width="11" height="10.5" fill="url(#wg)" stroke="#222" stroke-width="1"/><rect x="6" y="2" width="10" height="2" fill="#3a58b8"/><rect x="6" y="2" width="2" height="2" fill="#fff"/><path d="M2 11L6.5 6.5V9H13V13H6.5V15.5Z" fill="url(#ag)" stroke="#101850" stroke-width=".7"/></svg>
<svg class="a" style="left:129px;top:785px" width="20" height="18"><rect x="1.5" y="1.5" width="11" height="10.5" fill="url(#wg)" stroke="#222" stroke-width="1"/><rect x="2" y="2" width="10" height="2" fill="#3a58b8"/><rect x="2" y="2" width="2" height="2" fill="#fff"/><path d="M17 11L12.5 6.5V9H6V13H12.5V15.5Z" fill="url(#ag)" stroke="#101850" stroke-width=".7"/></svg>
<div class="a" style="left:233px;top:784px;width:81px;height:21px;background:#e1e1e1;border:1px solid #adadad"></div>
<div class="t" style="left:243px;top:789px;font-size:10.9px;line-height:13px;">Messages...</div>
<div class="a" style="left:593px;top:784px;width:81px;height:21px;background:#e1e1e1;border:1px solid #adadad"></div>
<div class="t" style="left:612px;top:790px;font-size:10.4px;line-height:12px;">Graphics</div>
<div class="a" style="left:972px;top:784px;width:73px;height:21px;background:#e1e1e1;border:2px solid #0078d7"></div>
<div class="t" style="left:1000px;top:789px;font-size:10.9px;line-height:13px;">OK</div>
<div class="a" style="left:1054px;top:784px;width:73px;height:21px;background:#e1e1e1;border:1px solid #adadad"></div>
<div class="t" style="left:1074px;top:790px;font-size:10.3px;line-height:12px;">Cancel</div>
<div class="a" style="left:53px;top:812px;width:1084px;height:1px;background:#a0a0a0"></div>
<div class="a" style="left:53px;top:833px;width:1084px;height:1px;background:#707070"></div>
<div class="a" style="left:53px;top:813px;width:1084px;height:1px;background:#fff"></div>
<div class="a" style="left:52px;top:811px;width:762px;height:24px;background:#78ee78;border-top:1px solid #50b050;border-bottom:1px solid #3a8a3a;border-left:1px solid #3a8a3a"></div>
<div class="a" style="left:53px;top:830px;width:760px;height:3px;background:#86fa86"></div>
<div class="t" style="left:54px;top:816px;font-size:10.9px;line-height:13px;">56) The FE mesh between the punching node and critical section is not dense enough. The shear force calculation will not be accurate.</div>
</body></html>
